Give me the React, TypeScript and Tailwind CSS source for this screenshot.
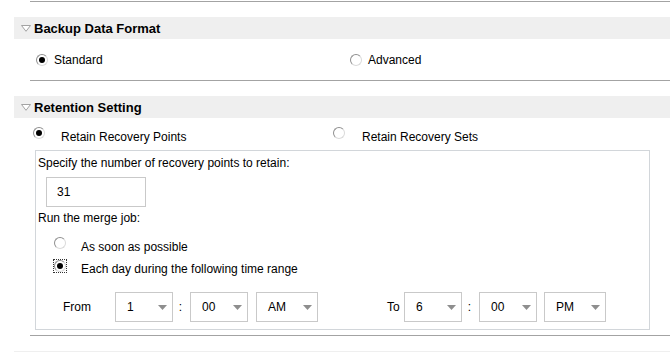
import React from 'react';

// 分组标题上的下拉三角
const Caret = () => (
  <svg width="10" height="7" viewBox="0 0 10 7" className="shrink-0">
    <polygon points="0.5,0.5 9.5,0.5 5,6.3" fill="#ffffff" stroke="#a3a3a3" strokeWidth="1" />
  </svg>
);

const Radio = ({ checked = false, focus = false }: { checked?: boolean; focus?: boolean }) => {
  const dot = (
    <span className="w-[12px] h-[12px] rounded-full border border-[#8f8f8f] border-r-[#dadada] border-b-[#dadada] bg-white flex items-center justify-center shrink-0">
      {checked && <span className="w-[6px] h-[6px] rounded-full bg-black" />}
    </span>
  );
  if (!focus) return dot;
  return <span className="outline outline-1 outline-dotted outline-[#333] flex shrink-0">{dot}</span>;
};

const Header = ({ title }: { title: string }) => (
  <div className="ml-[14px] h-[22px] bg-[#efefef] flex items-center pl-[7px]">
    <Caret />
    <span className="ml-[3px] text-[13px] font-bold text-black leading-none">{title}</span>
  </div>
);

const Select = ({ value, width }: { value: string; width: string }) => (
  <div className={`${width} h-[30px] border border-[#c9c9c9] bg-white flex items-center justify-between pl-[11px] pr-[5px] shrink-0`}>
    <span>{value}</span>
    <svg width="9" height="5" viewBox="0 0 9 5">
      <polygon points="0,0 9,0 4.5,5" fill="#8e8e8e" />
    </svg>
  </div>
);

const Colon = () => <div className="w-[17px] text-center shrink-0 pr-[2px]">:</div>;

export default function App() {
  return (
    <div
      className="w-[670px] h-[352px] bg-white overflow-hidden text-[12px] text-black"
      style={{ fontFamily: '"Liberation Sans", Arial, sans-serif' }}
    >
      <div className="mt-[1px] ml-[30px] h-px bg-[#a3a3a3]" />

      <div className="mt-[15px]">
        <Header title="Backup Data Format" />
      </div>
      <div className="h-[41px] flex items-center">
        <div className="ml-[36px] w-[314px] flex items-center">
          <Radio checked />
          <span className="ml-[6px]">Standard</span>
        </div>
        <div className="flex items-center">
          <Radio />
          <span className="ml-[6px]">Advanced</span>
        </div>
      </div>
      <div className="ml-[30px] h-px bg-[#a3a3a3]" />

      <div className="mt-[15px]">
        <Header title="Retention Setting" />
      </div>
      <div className="h-[32px] flex items-start">
        <div className="ml-[33px] w-[300px] flex items-start">
          <span className="mt-[9px]">
            <Radio checked />
          </span>
          <span className="ml-[16px] mt-[12px] leading-[14px]">Retain Recovery Points</span>
        </div>
        <div className="flex items-start">
          <span className="mt-[9px]">
            <Radio />
          </span>
          <span className="ml-[17px] mt-[12px] leading-[14px]">Retain Recovery Sets</span>
        </div>
      </div>

      <div className="ml-[35px] w-[615px] h-[180px] border border-[#d2d6da] pl-[2px] flex flex-col leading-[14px]">
        <div className="mt-[5px]">Specify the number of recovery points to retain:</div>
        <div className="ml-[8px] mt-[7px] w-[100px] h-[30px] border border-[#c9c9c9] flex items-center pl-[10px]">31</div>
        <div className="mt-[4px]">Run the merge job:</div>

        <div className="mt-[12px] ml-[16px] flex items-start">
          <Radio />
          <span className="ml-[15px] mt-[3px]">As soon as possible</span>
        </div>
        <div className="mt-[6px] ml-[16px] flex items-start">
          <Radio checked focus />
          <span className="ml-[15px] mt-[2px]">Each day during the following time range</span>
        </div>

        <div className="mt-[16px] ml-[25px] flex items-center">
          <div className="w-[52px] shrink-0">From</div>
          <Select value="1" width="w-[58px]" />
          <Colon />
          <Select value="00" width="w-[58px]" />
          <div className="w-[8px] shrink-0" />
          <Select value="AM" width="w-[62px]" />
          <div className="w-[69px] shrink-0" />
          <div className="w-[17px] shrink-0">To</div>
          <Select value="6" width="w-[58px]" />
          <Colon />
          <Select value="00" width="w-[58px]" />
          <div className="w-[7px] shrink-0" />
          <Select value="PM" width="w-[62px]" />
        </div>
      </div>

      <div className="mt-[5px] ml-[30px] h-px bg-[#a3a3a3]" />
      <div className="mt-[15px]">
        <Header title="" />
      </div>
    </div>
  );
}
